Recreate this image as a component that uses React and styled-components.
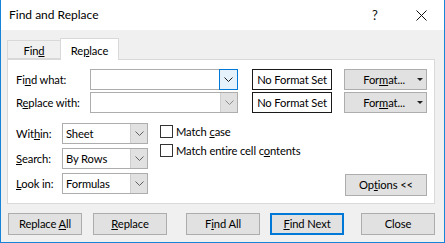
import React from 'react';
import styled, { createGlobalStyle, css } from 'styled-components';

const GlobalStyle = createGlobalStyle`
  html, body {
    margin: 0;
    padding: 0;
    background: #fff;
  }
  body {
    font-family: Lato, "Open Sans", sans-serif;
    font-size: 11.2px;
    letter-spacing: -0.12px;
    color: #000;
  }
`;

const Window = styled.div`
  width: 445px;
  height: 243px;
  box-sizing: border-box;
  border: 1px solid #1883d7;
  border-top: none;
  display: flex;
  flex-direction: column;
  overflow: hidden;
`;

const TitleBar = styled.div`
  height: 30px;
  flex-shrink: 0;
  background: #fff;
  display: flex;
  align-items: center;
  padding-left: 8px;
  font-size: 12px;
  letter-spacing: 0;
`;

const Title = styled.span`
  flex: 1;
  padding-bottom: 1px;
`;

const CaptionButton = styled.div`
  width: 46px;
  height: 30px;
  display: flex;
  align-items: center;
  justify-content: center;
  font-size: 13px;
  color: #111;
`;

const Body = styled.div`
  flex: 1;
  background: #f0f0f0;
  padding: 8px 9px 0 6px;
  display: flex;
  flex-direction: column;
`;

const TabStrip = styled.div`
  height: 21px;
  display: flex;
  align-items: flex-end;
  position: relative;
  z-index: 1;
`;

const Tab = styled.div`
  box-sizing: border-box;
  width: ${p => p.$width}px;
  height: ${p => (p.$active ? 22 : 19)}px;
  border: 1px solid #d9d9d9;
  display: flex;
  justify-content: center;
  align-items: flex-start;
  padding-top: ${p => (p.$active ? 5 : 3)}px;
  ${p =>
    p.$active
      ? css`
          background: #fff;
          border-bottom: none;
          margin-bottom: -1px;
        `
      : css`
          background: #f0f0f0;
          border-right: none;
        `}
`;

const Pane = styled.div`
  box-sizing: border-box;
  height: 145px;
  background: #fff;
  border: 1px solid #d9d9d9;
  padding: 9px 7px 0 8px;
`;

const TopRows = styled.div`
  display: flex;
  flex-direction: column;
  gap: 2px;
`;

const TopRow = styled.div`
  display: flex;
  align-items: center;
  height: 21px;
`;

const Label = styled.span`
  width: ${p => p.$width}px;
  flex-shrink: 0;
  white-space: nowrap;
`;

const Key = styled.u`
  text-decoration: underline;
  text-underline-offset: 1px;
  text-decoration-thickness: 1px;
`;

const Combo = styled.div`
  box-sizing: border-box;
  height: 21px;
  width: ${p => p.$width}px;
  border: 1px solid #adadad;
  background: #fff;
  display: flex;
`;

const ComboField = styled.div`
  flex: 1;
  padding-left: 3px;
  display: flex;
  align-items: center;
  padding-bottom: 1px;
`;

const dropVariants = {
  focused: css`
    background: #e5f1fb;
    outline: 1px solid #0078d7;
    color: #1e1e1e;
  `,
  disabled: css`
    background: #e0e0e0;
    border-left: 1px solid #cfcfcf;
    color: #8c8c8c;
  `,
  normal: css`
    background: #e1e1e1;
    border-left: 1px solid #cdcdcd;
    color: #606060;
  `
};

const DropButton = styled.div`
  box-sizing: border-box;
  width: 17px;
  display: flex;
  align-items: center;
  justify-content: center;
  ${p => dropVariants[p.$variant || 'normal']}
`;

const FormatBox = styled.div`
  box-sizing: border-box;
  height: 21px;
  width: 80px;
  margin-left: 14px;
  border: 1px solid #1a1a1a;
  display: flex;
  align-items: center;
  justify-content: center;
  padding-bottom: 1px;
  white-space: nowrap;
`;

const Button = styled.div`
  box-sizing: border-box;
  height: ${p => p.$height || 22}px;
  width: ${p => p.$width || 74}px;
  margin-left: ${p => p.$gap || 0}px;
  background: #e1e1e1;
  border: 1px solid ${p => (p.$default ? '#0078d7' : '#adadad')};
  box-shadow: ${p => (p.$default ? 'inset 0 0 0 1px #0078d7' : 'none')};
  display: flex;
  align-items: center;
  justify-content: ${p => p.$justify || 'center'};
  padding-bottom: 1px;
  white-space: pre;
`;

const FormatButton = styled(Button)`
  padding-right: 3px;
  gap: 12px;
`;

const LowerRow = styled.div`
  display: flex;
  margin-top: 10px;
  height: 72px;
`;

const OptionGrid = styled.div`
  display: grid;
  grid-template-columns: 46px 86px;
  grid-auto-rows: 21px;
  row-gap: 4px;
  align-items: center;
`;

const CheckColumn = styled.div`
  display: flex;
  flex-direction: column;
  gap: 5px;
  margin-left: 12px;
  padding-top: 1px;
`;

const CheckRow = styled.label`
  display: flex;
  align-items: center;
  gap: 3px;
  height: 14px;
  white-space: pre;
`;

const CheckBox = styled.span`
  box-sizing: border-box;
  width: 13px;
  height: 13px;
  border: 1px solid #333;
  background: #fff;
`;

const OptionsButton = styled(Button)`
  margin-left: auto;
  align-self: flex-end;
  margin-bottom: -1px;
`;

const Footer = styled.div`
  display: flex;
  margin-top: 9px;
  padding-left: 1px;
`;

const Chevron = () => (
  <svg width="9" height="5" viewBox="0 0 9 5">
    <polyline points="0.5,0.5 4.5,4.5 8.5,0.5" fill="none" stroke="currentColor" strokeWidth="1" />
  </svg>
);

const CloseGlyph = () => (
  <svg width="11" height="11" viewBox="0 0 11 11">
    <path d="M0.5 0.5 L10.5 10.5 M10.5 0.5 L0.5 10.5" stroke="#111" strokeWidth="1" />
  </svg>
);

const Caret = () => (
  <svg width="6" height="3" viewBox="0 0 6 3">
    <polygon points="0,0 6,0 3,3" fill="#222" />
  </svg>
);

const ComboBox = ({ width, value, variant }) => (
  <Combo $width={width}>
    <ComboField>{value}</ComboField>
    <DropButton $variant={variant}>
      <Chevron />
    </DropButton>
  </Combo>
);

const FormatRow = ({ label, variant }) => (
  <TopRow>
    <Label $width={74}>{label}</Label>
    <ComboBox width={148} value="" variant={variant} />
    <FormatBox>No Format Set</FormatBox>
    <FormatButton $width={83} $height={21} $gap={12} $justify="flex-end">
      <span>
        For<Key>m</Key>at...
      </span>
      <Caret />
    </FormatButton>
  </TopRow>
);

export default function App() {
  return (
    <>
      <GlobalStyle />
      <Window>
        <TitleBar>
          <Title>Find and Replace</Title>
          <CaptionButton>?</CaptionButton>
          <CaptionButton>
            <CloseGlyph />
          </CaptionButton>
        </TitleBar>
        <Body>
          <TabStrip>
            <Tab $width={53}>
              <span>
                Fin<Key>d</Key>
              </span>
            </Tab>
            <Tab $width={59} $active>
              <span>
                Re<Key>p</Key>lace
              </span>
            </Tab>
          </TabStrip>
          <Pane>
            <TopRows>
              <FormatRow
                variant="focused"
                label={
                  <>
                    Fi<Key>n</Key>d what:
                  </>
                }
              />
              <FormatRow
                variant="disabled"
                label={
                  <>
                    R<Key>e</Key>place with:
                  </>
                }
              />
            </TopRows>
            <LowerRow>
              <OptionGrid>
                <Label>
                  Wit<Key>h</Key>in:
                </Label>
                <ComboBox width={86} value="Sheet" />
                <Label>
                  <Key>S</Key>earch:
                </Label>
                <ComboBox width={86} value="By Rows" />
                <Label>
                  <Key>L</Key>ook in:
                </Label>
                <ComboBox width={86} value="Formulas" />
              </OptionGrid>
              <CheckColumn>
                <CheckRow>
                  <CheckBox />
                  <span>
                    Match <Key>c</Key>ase
                  </span>
                </CheckRow>
                <CheckRow>
                  <CheckBox />
                  <span>
                    Match entire cell c<Key>o</Key>ntents
                  </span>
                </CheckRow>
              </CheckColumn>
              <OptionsButton $width={82}>
                <span>
                  Op<Key>t</Key>ions &lt;&lt;
                </span>
              </OptionsButton>
            </LowerRow>
          </Pane>
          <Footer>
            <Button>
              <span>
                Replace <Key>A</Key>ll
              </span>
            </Button>
            <Button $gap={11}>
              <span>
                <Key>R</Key>eplace
              </span>
            </Button>
            <Button $gap={19}>
              <span>
                F<Key>i</Key>nd All
              </span>
            </Button>
            <Button $gap={10} $default>
              <span>
                <Key>F</Key>ind Next
              </span>
            </Button>
            <Button $gap={17}>Close</Button>
          </Footer>
        </Body>
      </Window>
    </>
  );
}
